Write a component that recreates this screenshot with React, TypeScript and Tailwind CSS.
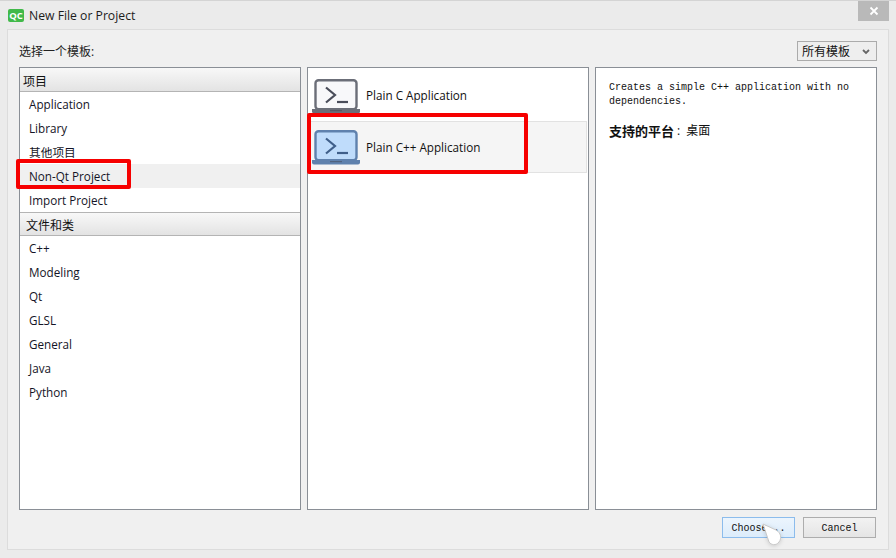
import React from 'react';

const SANS = "font-['Open_Sans','Noto_Sans_CJK_SC',sans-serif]";
const MONO = "font-['Liberation_Mono','Noto_Sans_CJK_SC',monospace]";

const LaptopIcon = ({ frame, screen, glyph }: { frame: string; screen: string; glyph: string }) => (
  <svg width="48" height="35" viewBox="0 0 48 35" className="shrink-0">
    <rect x="3.5" y="1.2" width="41" height="29" rx="3" fill={screen} stroke={frame} strokeWidth="2.4" />
    <path d="M0 30h48v2.5a2 2 0 0 1-2 2H2a2 2 0 0 1-2-2z" fill={frame} />
    <path d="M18 31h12v1.2H18z" fill="#3f4350" opacity="0.5" />
    <path d="M14 8.5l9 7.5-9 7.5" fill="none" stroke={glyph} strokeWidth="2.2" />
    <path d="M25 23h11" stroke={glyph} strokeWidth="2.2" />
  </svg>
);

const GroupHeader = ({ label, first }: { label: string; first?: boolean }) => (
  <div
    className={`h-6 pt-[4px] flex items-center text-[12px] text-[#111] border-b border-[#b4b4b4] bg-gradient-to-b from-[#f8f8f8] to-[#e3e3e3] ${
      first ? 'pl-[3px]' : 'pl-[6px] border-t'
    }`}
  >
    {label}
  </div>
);

const Row = ({ label, active }: { label: string; active?: boolean }) => (
  <div className={`h-6 pl-[9px] pt-[2px] flex items-center text-[11.7px] text-[#141426] ${active ? 'bg-[#f0f0f0]' : ''}`}>
    {label}
  </div>
);

const App: React.FC = () => {
  return (
    <div className={`relative w-[896px] h-[558px] overflow-hidden bg-[#ebebeb] border-t border-[#d4d4d4] flex flex-col ${SANS}`}>
      <div className="h-[28px] shrink-0 flex items-start pl-[8px] pt-[7px] gap-[5px]">
        <div className="w-4 h-[13px] mt-[1px] rounded-[2px] bg-[#41b94a] text-white text-[9.5px] font-bold leading-[13px] text-center">QC</div>
        <span className="text-[12.2px] leading-[15px] text-[#1c1c1c]">New File or Project</span>
        <div className="ml-auto mr-[7px] -mt-[7px] w-[31px] h-5 bg-[#b9b9b9] flex items-center justify-center">
          <svg width="10" height="10" viewBox="0 0 10 10">
            <path d="M1.5 1.5l7 7M8.5 1.5l-7 7" stroke="#fff" strokeWidth="1.8" />
          </svg>
        </div>
      </div>

      <div className="mx-[7px] mb-[8px] flex-1 bg-[#f0f0f0] border border-[#dcdcdc] pl-[11px] pr-[11px] flex flex-col">
        <div className="h-[37px] shrink-0 flex items-center justify-between">
          <span className="text-[12px] text-[#222] mt-[6px]">选择一个模板:</span>
          <div className="w-20 h-[20px] mt-[5px] border border-[#ababab] bg-[#eeeeee] flex items-center pl-[4px] pr-[6px] pt-[2px] text-[12px] text-[#111]">
            所有模板
            <svg width="8" height="6" viewBox="0 0 8 6" className="ml-auto">
              <path d="M1 1l3 3 3-3" fill="none" stroke="#666" strokeWidth="1.8" />
            </svg>
          </div>
        </div>

        <div className="h-[443px] shrink-0 grid grid-cols-[282px_282px_282px] gap-[6px]">
          <div className="bg-white border border-[#8a8f96]">
            <GroupHeader label="项目" first />
            <Row label="Application" />
            <Row label="Library" />
            <Row label="其他项目" />
            <Row label="Non-Qt Project" active />
            <Row label="Import Project" />
            <GroupHeader label="文件和类" />
            <Row label="C++" />
            <Row label="Modeling" />
            <Row label="Qt" />
            <Row label="GLSL" />
            <Row label="General" />
            <Row label="Java" />
            <Row label="Python" />
          </div>

          <div className="bg-white border border-[#8a8f96] pr-[1px]">
            <div className="h-[53px] pt-[3px] flex items-center gap-[6px] pl-[4px] text-[11.7px] text-[#111]">
              <LaptopIcon frame="#6b6e78" screen="#f8f8fa" glyph="#4a4d5a" />
              Plain C Application
            </div>
            <div className="h-[52px] pt-[1px] flex items-center gap-[6px] pl-[4px] text-[11.7px] text-[#111] bg-[#f5f5f5] border border-l-0 border-[#e2e2e2]">
              <LaptopIcon frame="#5f81ad" screen="#bfdcfb" glyph="#3f5f8a" />
              Plain C++ Application
            </div>
          </div>

          <div className={`bg-white border border-[#8a8f96] pl-[13px] pr-[12px] pt-[13px] text-[10px] leading-[14px] text-[#111] ${MONO}`}>
            <p className="whitespace-pre-wrap">Creates a simple C++ application with no dependencies.</p>
            <p className={`mt-[13px] text-[12px] leading-[18px] flex ${SANS}`}>
              <b className="text-[13px]">支持的平台</b>
              <span className="ml-[3px] mr-[6px]">:</span>
              桌面
            </p>
          </div>
        </div>

        <div className={`flex justify-end gap-2 pt-[7px] pr-px text-[10px] text-[#111] ${MONO}`}>
          <div className="w-[73px] h-[21px] pt-[2px] border border-[#8cbcec] bg-gradient-to-b from-[#ecf5fd] to-[#dcecfb] flex items-center justify-center">
            Choose...
          </div>
          <div className="w-[73px] h-[21px] pt-[2px] border border-[#adadad] bg-gradient-to-b from-[#f2f2f2] to-[#e5e5e5] flex items-center justify-center">
            Cancel
          </div>
        </div>
      </div>

      {/* red annotation boxes */}
      <div className="absolute left-[16px] top-[158px] w-[115px] h-[30px] border-4 border-[#f60000] rounded-[2px]" />
      <div className="absolute left-[307px] top-[112px] w-[221px] h-[61px] border-4 border-[#f60000] rounded-[2px]" />

      {/* touch pointer over the button */}
      <svg width="22" height="24" viewBox="0 0 22 24" className="absolute left-[761px] top-[522px] drop-shadow-sm">
        <path d="M2 1l13 6c5 3 6 8 3 12-3 4-8 3-10 0z" fill="#fff" stroke="#c8c8c8" strokeWidth="1" />
      </svg>
    </div>
  );
};

export default App;
